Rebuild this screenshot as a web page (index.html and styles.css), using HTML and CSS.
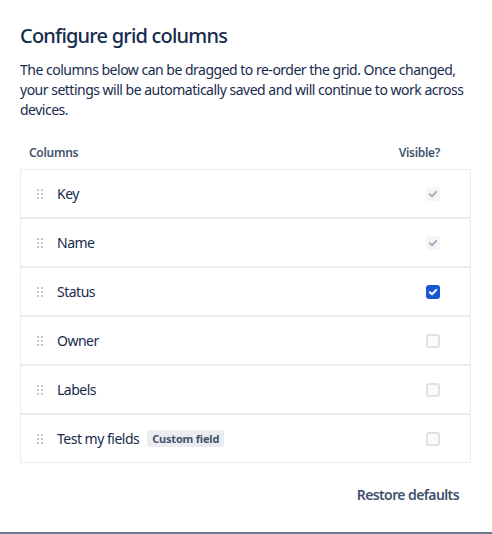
FILE: index.html
```html
<!DOCTYPE html>
<html>
<head>
<meta charset="utf-8">
<link rel="stylesheet" href="styles.css">
</head>
<body>
<div class="modal">
  <h1 class="title">Configure grid columns</h1>
  <p class="desc">The columns below can be dragged to re-order the grid. Once changed, your settings will be automatically saved and will continue to work across devices.</p>
  <div class="head">
    <span>Columns</span>
    <span>Visible?</span>
  </div>
  <div class="list">
    <div class="row">
      <span class="handle"></span>
      <span class="name">Key</span>
      <span class="check disabled"><svg viewBox="0 0 14 14"><path d="M3.8 7.2l2.2 2.1 4.3-4.4" /></svg></span>
    </div>
    <div class="row">
      <span class="handle"></span>
      <span class="name">Name</span>
      <span class="check disabled"><svg viewBox="0 0 14 14"><path d="M3.8 7.2l2.2 2.1 4.3-4.4" /></svg></span>
    </div>
    <div class="row">
      <span class="handle"></span>
      <span class="name">Status</span>
      <span class="check on"><svg viewBox="0 0 14 14"><path d="M3.8 7.2l2.2 2.1 4.3-4.4" /></svg></span>
    </div>
    <div class="row">
      <span class="handle"></span>
      <span class="name">Owner</span>
      <span class="check"></span>
    </div>
    <div class="row">
      <span class="handle"></span>
      <span class="name">Labels</span>
      <span class="check"></span>
    </div>
    <div class="row">
      <span class="handle"></span>
      <span class="name">Test my fields</span>
      <span class="tag">Custom field</span>
      <span class="check"></span>
    </div>
  </div>
  <div class="footer">
    <button class="restore">Restore defaults</button>
  </div>
</div>
</body>
</html>
```
FILE: styles.css
```css
html, body {
  margin: 0;
  padding: 0;
  background: #ffffff;
}
body {
  font-family: "Noto Sans", "Open Sans", sans-serif;
  color: #172b4d;
}
.modal {
  box-sizing: border-box;
  height: 534px;
  padding: 24px 21px 0 20px;
  border-bottom: 2px solid #6b778c;
  display: flex;
  flex-direction: column;
}
.title {
  margin: 0;
  font-size: 20px;
  line-height: 24px;
  font-weight: 500;
  letter-spacing: -0.8px;
  color: #172b4d;
}
.desc {
  margin: 12px 0 0;
  font-size: 14px;
  line-height: 20px;
  letter-spacing: -0.5px;
  color: #172b4d;
}
.head {
  display: flex;
  justify-content: space-between;
  margin-top: 25px;
  padding: 0 31px 0 9px;
  font-size: 12px;
  line-height: 16px;
  font-weight: 600;
  letter-spacing: -0.3px;
  color: #44546f;
}
.list {
  margin-top: 8px;
  display: flex;
  flex-direction: column;
}
.row {
  box-sizing: border-box;
  height: 49px;
  border: 1px solid #ebecf0;
  display: flex;
  align-items: center;
  padding: 0 30px 0 16px;
  font-size: 14px;
  letter-spacing: -0.5px;
}
.handle {
  width: 6px;
  height: 10px;
  background-image: radial-gradient(circle, #c1c7d0 0.9px, transparent 1.1px);
  background-size: 4px 4px;
  background-position: -1px -1px;
  flex: none;
}
.name {
  margin-left: 14px;
  color: #172b4d;
}
.tag {
  margin-left: 8px;
  background: #ebecf0;
  color: #42526e;
  font-size: 11px;
  font-weight: 700;
  line-height: 17px;
  letter-spacing: -0.2px;
  padding: 0 5px;
  border-radius: 3px;
}
.check {
  margin-left: auto;
  box-sizing: border-box;
  width: 14px;
  height: 14px;
  border-radius: 3px;
  border: 2px solid #dfe1e6;
  background: #fafbfc;
  display: flex;
  align-items: center;
  justify-content: center;
}
.check svg {
  width: 14px;
  height: 14px;
  flex: none;
  fill: none;
  stroke-width: 2;
  stroke-linecap: round;
  stroke-linejoin: round;
}
.check.disabled {
  border: none;
  background: #f4f5f7;
}
.check.disabled svg {
  stroke: #a5adba;
}
.check.on {
  border: none;
  background: #1858d5;
}
.check.on svg {
  stroke: #ffffff;
}
.footer {
  display: flex;
  justify-content: flex-end;
  margin-top: 15px;
}
.restore {
  font-family: inherit;
  font-size: 14px;
  font-weight: 600;
  letter-spacing: -0.6px;
  color: #42526e;
  background: none;
  border: none;
  height: 32px;
  padding: 0 12px;
  border-radius: 3px;
}
```
